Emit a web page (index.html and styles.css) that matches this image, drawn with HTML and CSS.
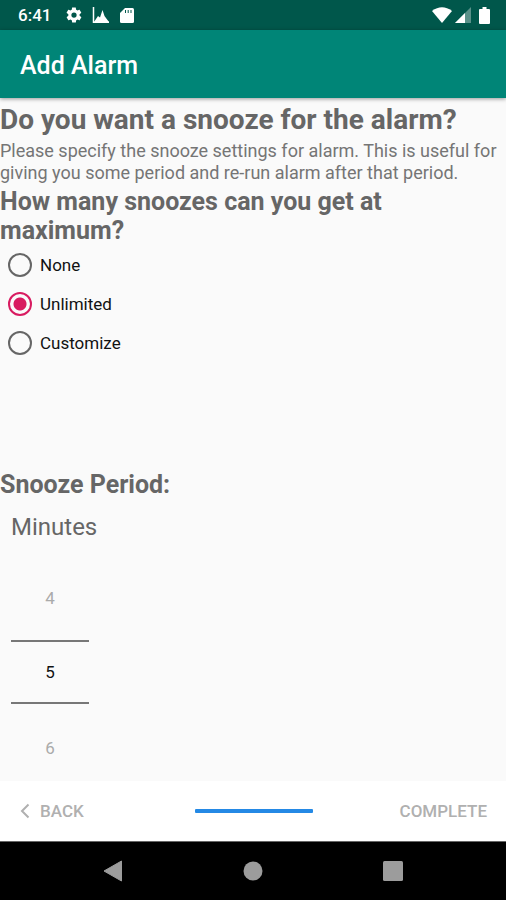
FILE: index.html
```html
<!DOCTYPE html>
<html lang="en">
<head>
<meta charset="utf-8">
<meta name="viewport" content="width=device-width, initial-scale=1">
<title>Add Alarm</title>
<link rel="stylesheet" href="styles.css">
</head>
<body>
<div class="status">
  <span class="time">6:41</span>
  <svg class="gear" width="18" height="18" viewBox="0 0 24 24" fill="currentColor" aria-hidden="true"><path d="M19.4 13c.1-.3.1-.6.1-1s0-.7-.1-1l2.1-1.6c.2-.2.2-.4.1-.6l-2-3.500c-.1-.2-.4-.3-.6-.2l-2.500 1c-.5-.4-1.100-.7-1.700-1l-.4-2.600c0-.3-.2-.5-.5-.5h-4c-.3 0-.5.2-.5.5L9 5.100c-.6.3-1.200.6-1.700 1l-2.500-1c-.2-.1-.5 0-.6.2l-2 3.500c-.1.2-.1.400.1.600L4.500 11c0 .3-.1.600-.1 1s0 .7.1 1l-2.100 1.600c-.2.2-.2.400-.1.600l2 3.500c.1.2.4.3.6.2l2.500-1c.5.4 1.100.7 1.700 1l.4 2.600c0 .3.2.5.5.5h4c.3 0 .5-.2.5-.5l.4-2.600c.6-.3 1.200-.6 1.700-1l2.500 1c.2.1.5 0 .6-.2l2-3.500c.1-.2.1-.4-.1-.6zM12 15.500A3.500 3.500 0 1 1 12 8.500a3.500 3.500 0 0 1 0 7z"/></svg>
  <svg width="18" height="18" viewBox="0 0 18 18" aria-hidden="true"><path d="M1.500 1v15.200H17" fill="none" stroke="currentColor" stroke-width="1.500"/><path d="M2 16 6 10l2 1.500L10.500 4l2 6 4.500 6z" fill="currentColor"/></svg>
  <svg class="card" width="14" height="17" viewBox="0 0 14 17" aria-hidden="true"><path d="M5 1h7.500Q14 1 14 2.500v12q0 1.500-1.500 1.500h-11Q0 16 0 14.500V6z" fill="currentColor"/><path d="M5.500 3v3M8.200 3v3M11 3v3" stroke="#00574b" stroke-width="1"/></svg>
  <span class="signals">
    <svg width="20" height="16" viewBox="0 0 20 16" aria-hidden="true"><path d="M0 4Q10-3.500 20 4L10 16z" fill="currentColor"/></svg>
    <svg width="16" height="16" viewBox="0 0 16 16" aria-hidden="true"><path d="M16 0v16H0z" fill="currentColor" opacity=".35"/><path d="M10 6v10H0z" fill="currentColor"/></svg>
    <svg width="11" height="17" viewBox="0 0 11 17" aria-hidden="true"><path d="M3.500 0h4v2H10q1 0 1 1v13q0 1-1 1H1q-1 0-1-1V3q0-1 1-1h2.500z" fill="currentColor"/></svg>
  </span>
</div>
<header class="appbar"><h1>Add Alarm</h1></header>
<main>
  <h2 class="question">Do you want a snooze for the alarm?</h2>
  <p class="description">Please specify the snooze settings for alarm. This is useful for giving you some period and re-run alarm after that period.</p>
  <fieldset>
    <legend class="heading">How many snoozes can you get at maximum?</legend>
    <label class="option"><input type="radio" name="snoozes" value="none">None</label>
    <label class="option"><input type="radio" name="snoozes" value="unlimited" checked>Unlimited</label>
    <label class="option"><input type="radio" name="snoozes" value="custom">Customize</label>
  </fieldset>
  <section>
    <h3 class="heading">Snooze Period:</h3>
    <label class="unit" for="minutes">Minutes</label>
    <div class="picker">
      <button type="button">4</button>
      <input id="minutes" type="text" inputmode="numeric" value="5">
      <button type="button">6</button>
    </div>
  </section>
</main>
<footer class="stepper">
  <button type="button" class="back"><svg width="10" height="16" viewBox="0 0 10 16" aria-hidden="true"><path d="M8.500 1.500 2 8l6.500 6.500" fill="none" stroke="currentColor" stroke-width="2"/></svg>BACK</button>
  <div class="progress"></div>
  <button type="button" class="complete">COMPLETE</button>
</footer>
<nav class="system">
  <button type="button" aria-label="Back"><svg width="20" height="22" viewBox="0 0 20 22"><path d="M18.500 1v20L1 11z" fill="currentColor" stroke="currentColor" stroke-linejoin="round"/></svg></button>
  <button type="button" aria-label="Home"><svg width="20" height="20" viewBox="0 0 20 20"><circle cx="10" cy="10" r="9.500" fill="currentColor"/></svg></button>
  <button type="button" aria-label="Overview"><svg width="20" height="20" viewBox="0 0 20 20"><rect width="20" height="20" rx="1.500" fill="currentColor"/></svg></button>
</nav>
</body>
</html>
```
FILE: styles.css
```css
* { box-sizing: border-box; }
body {
  margin: 0;
  min-height: 100vh;
  display: flex;
  flex-direction: column;
  background: #fafafa;
  color: #666;
  font-family: Roboto, "Liberation Sans", sans-serif;
}
h1, h2, h3, p { margin: 0; }
button, input { font: inherit; color: inherit; }
button { padding: 0; border: 0; background: none; }
svg { display: block; flex: none; }

.status {
  display: flex;
  align-items: center;
  height: 30px;
  padding: 0 16px 0 18px;
  background: #00574b;
  color: #fff;
}
.time { font-size: 17px; font-weight: 500; line-height: 20px; }
.gear { margin: 0 9px 0 14px; }
.card { margin-left: 10px; }
.signals { display: flex; align-items: center; gap: 3px; margin-left: auto; }
.signals svg:last-child { margin-left: 5px; }

.appbar {
  display: flex;
  align-items: center;
  height: 68px;
  padding: 4px 20px 0;
  background: #008577;
  color: #fff;
  box-shadow: 0 1px 4px rgba(0, 0, 0, .4);
}
.appbar h1 { font-size: 25px; font-weight: 500; line-height: 30px; }

main { flex: 1; padding-top: 4px; }
.question { font-size: 28px; font-weight: 700; line-height: 36px; }
.description { font-size: 18px; line-height: 22px; padding-top: 2px; color: #757575; }
.heading { padding: 0; font-size: 25px; font-weight: 700; line-height: 29px; }
fieldset { min-width: 0; margin: 3px 0 0; padding: 0; border: 0; }
.option {
  display: flex;
  align-items: center;
  gap: 8px;
  height: 39px;
  padding-left: 8px;
  color: #111;
  font-size: 17px;
}
.option input {
  appearance: none;
  width: 24px;
  height: 24px;
  margin: 0;
  border: 2px solid #666;
  border-radius: 50%;
}
.option input:checked {
  border-color: #d81b60;
  background: radial-gradient(circle, #d81b60 6px, transparent 7px);
}
section { padding-top: 108px; }
.unit { display: block; padding: 12px 11px 0; font-size: 24px; line-height: 32px; }
.picker {
  display: flex;
  flex-direction: column;
  width: 78px;
  margin: 20px 0 0 11px;
  font-size: 17px;
}
.picker button { height: 77px; color: #aaa; }
.picker button:first-child { padding-bottom: 8px; }
.picker button:last-child { padding-top: 10px; }
.picker input {
  width: 100%;
  height: 64px;
  padding: 0;
  border: solid #777;
  border-width: 2px 0;
  border-radius: 0;
  background: none;
  color: #111;
  text-align: center;
}

.stepper {
  display: grid;
  grid-template-columns: 1fr 118px 1fr;
  align-items: center;
  height: 60px;
  padding: 0 19px 0 20px;
  background: #fff;
  color: #b0b0b0;
  font-size: 17px;
  font-weight: 500;
}
.back { display: flex; align-items: center; gap: 10px; justify-self: start; }
.complete { justify-self: end; }
.progress { height: 4px; background: #2489e5; border-radius: 1px; }

.system {
  display: flex;
  justify-content: center;
  gap: 120px;
  height: 59px;
  border-top: 1px solid #666;
  background: #000;
  color: #9c9c9c;
}
.system button { display: grid; place-items: center; width: 20px; }
```
